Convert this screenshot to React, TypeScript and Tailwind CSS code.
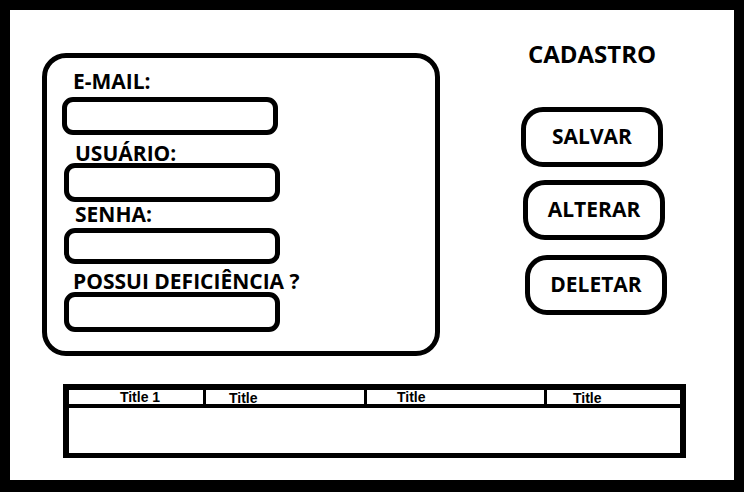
import React from "react";

const labelFont = { fontFamily: '"Open Sans", "DejaVu Sans", sans-serif' };
const tableFont = { fontFamily: '"Liberation Sans", Arial, sans-serif' };

function Field({ label, labelClass, inputClass }: { label: string; labelClass: string; inputClass: string }) {
    return (
        <>
            <div className={`text-[21px] font-bold leading-[20px] text-black whitespace-nowrap ${labelClass}`}>{label}</div>
            <div className={`w-[216px] border-[5px] border-black rounded-[11px] bg-white ${inputClass}`}></div>
        </>
    );
}

function ActionButton({ text, className }: { text: string; className: string }) {
    return (
        <button
            className={`w-[142px] h-[60px] border-[5px] border-black rounded-[22px] bg-white flex items-center justify-center text-[21px] font-bold text-black ${className}`}
        >
            {text}
        </button>
    );
}

export default function App() {
    return (
        <div className="w-[744px] h-[492px] border-[10px] border-b-[12px] border-black bg-white" style={labelFont}>
            {/* Top area */}
            <div className="flex items-start">
                {/* Form card */}
                <div className="ml-[32px] mt-[43px] w-[398px] h-[303px] border-[5px] border-black rounded-[24px] flex flex-col">
                    <Field label="E-MAIL:" labelClass="ml-[26px] mt-[13px]" inputClass="ml-[15px] mt-[6px] h-[38px]" />
                    <Field label="USUÁRIO:" labelClass="ml-[28px] mt-[8px]" inputClass="ml-[17px] mt-[0px] h-[39px]" />
                    <Field label="SENHA:" labelClass="ml-[28px] mt-[2px]" inputClass="ml-[17px] mt-[4px] h-[36px]" />
                    <Field label="POSSUI DEFICIÊNCIA ?" labelClass="ml-[26px] mt-[7px]" inputClass="ml-[17px] mt-[1px] h-[40px]" />
                </div>

                {/* Right actions */}
                <div className="ml-[81px] mt-[29px] w-[142px] flex flex-col">
                    <h1 className="text-[24px] font-bold leading-[30px] text-black text-center whitespace-nowrap">CADASTRO</h1>
                    <ActionButton text="SALVAR" className="mt-[38px]" />
                    <ActionButton text="ALTERAR" className="mt-[13px] ml-[2px]" />
                    <ActionButton text="DELETAR" className="mt-[15px] ml-[4px]" />
                </div>
            </div>

            {/* Table */}
            <div className="ml-[53px] mt-[28px] w-[623px] h-[74px] border-[6px] border-b-[5px] border-black flex flex-col" style={tableFont}>
                <div className="flex h-[18px] border-b-[4px] border-black text-[14px] font-bold leading-[14px] text-black">
                    <div className="w-[134px] pl-[8px] text-center">Title 1</div>
                    <div className="w-[3px] bg-black"></div>
                    <div className="w-[158px] pl-[23px] pt-[1px]">Title</div>
                    <div className="w-[3px] bg-black"></div>
                    <div className="w-[177px] pl-[30px]">Title</div>
                    <div className="w-[3px] bg-black"></div>
                    <div className="w-[133px] pl-[26px] pt-[1px]">Title</div>
                </div>
                <div className="flex-1"></div>
            </div>
        </div>
    );
}
